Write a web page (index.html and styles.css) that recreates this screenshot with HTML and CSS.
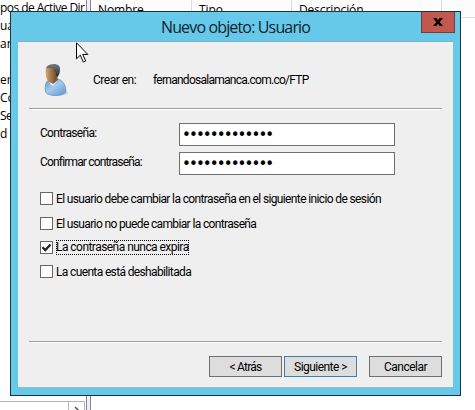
FILE: index.html
```html
<!DOCTYPE html>
<html lang="es">
<head>
<meta charset="utf-8">
<title>Nuevo objeto: Usuario</title>
<link rel="stylesheet" href="styles.css">
</head>
<body>
<div class="desktop">
  <aside class="tree">
    <ul class="tree-list">
      <li class="t-root">pos de Active Dir</li><li>ua</li><li>an</li><li></li><li>ers</li><li>Co</li><li class="t-s">Sec</li><li>d S</li>
    </ul>
    <div class="hscroll"><span class="hscroll-btn"><svg width="8" height="10" viewBox="0 0 8 10"><path d="M2 1l4 4-4 4" fill="none" stroke="#555" stroke-width="1.5"/></svg></span></div>
  </aside>
  <div class="splitter"></div>
  <main class="list">
    <div class="list-head"><span class="c1">Nombre</span><span class="c2">Tipo</span><span class="c3">Descripción</span><span class="c4"></span></div>
  </main>
</div>

<section class="dialog">
  <header class="titlebar">
    <h1><span class="fit title-text">Nuevo objeto: Usuario</span></h1>
    <button class="close" aria-label="Cerrar"><svg width="10" height="8" viewBox="0 0 10 8"><path d="M0 0h3.300L5 2.300 6.700 0H10L6.600 4 10 8H6.700L5 5.700 3.300 8H0l3.400-4z"/></svg></button>
  </header>
  <div class="body">
    <div class="who">
      <svg class="avatar" width="26" height="34" viewBox="0 0 26 34">
        <defs>
          <linearGradient id="coat" x1="0" y1="0" x2="1" y2="1"><stop offset="0" stop-color="#5f97c9"/><stop offset=".45" stop-color="#a5cbed"/><stop offset="1" stop-color="#5a94cc"/></linearGradient>
          <linearGradient id="skin" x1="0" y1="0" x2="1" y2="0"><stop offset="0" stop-color="#d3aa7b"/><stop offset=".4" stop-color="#a6794d"/><stop offset="1" stop-color="#5d3b20"/></linearGradient>
          <linearGradient id="hair" x1="0" y1="0" x2="0" y2="1"><stop offset="0" stop-color="#777b7c"/><stop offset="1" stop-color="#2b2b2b"/></linearGradient>
        </defs>
        <ellipse cx="14" cy="30" rx="11" ry="2.5" fill="#c9cacb"/>
        <path d="M2.500 29c-1-5 0-10 3-12l9-1c5 1 8 5 8.500 12-2 6-17 6-20.500 1z" fill="url(#coat)" stroke="#5788b4" stroke-width=".6"/>
        <path d="M5 17l3 5 2 1 5-6-1-1z" fill="#d9e8f5"/>
        <path d="M6 14l8-1 1 4-5 4-4-4z" fill="#865a34"/>
        <path d="M3 5c2-3 10-2 12 1 1 4-1 10-4 13-2 1-5 1-6-1-2-3-3-9-2-13z" fill="url(#skin)"/>
        <path d="M3 4.500C5 1.500 8 1 11 1c4 0 6.500 2 6 6 0 3-1 5-2.500 7L13 12V9l-2-1V5.500c-3 0-5-1-8-1z" fill="url(#hair)"/>
      </svg>
      <span class="who-label"><span class="fit">Crear en:</span></span>
      <span class="fit path">fernandosalamanca.com.co/FTP</span>
    </div>
    <hr>
    <div class="fields">
      <label class="field"><span class="field-label"><span class="fit l1">Contraseña:</span></span><span class="input">•••••••••••••</span></label>
      <label class="field"><span class="field-label"><span class="fit l2">Confirmar contraseña:</span></span><span class="input">•••••••••••••</span></label>
    </div>
    <div class="options">
      <label class="option"><i class="box"></i><span class="fit k1">El usuario debe cambiar la contraseña en el siguiente inicio de sesión</span></label>
      <label class="option"><i class="box"></i><span class="fit k2">El usuario no puede cambiar la contraseña</span></label>
      <label class="option"><i class="box"><svg width="11" height="11" viewBox="0 0 11 11"><path d="M1.500 5.200L4.300 8 9.500 2.500" fill="none" stroke="#222" stroke-width="2.300"/></svg></i><span class="fit k3 focus">La contraseña nunca expira</span></label>
      <label class="option"><i class="box"></i><span class="fit k4">La cuenta está deshabilitada</span></label>
    </div>
    <hr>
    <footer class="actions">
      <button class="btn back">&lt; Atrás</button>
      <button class="btn primary">Siguiente &gt;</button>
      <button class="btn cancel">Cancelar</button>
    </footer>
  </div>
</section>
<svg class="cursor" width="14" height="22" viewBox="0 0 14 22"><path d="M.5.8v16l3.800-3.600 3 6.800 2.400-1-3-6.600h5.100z" fill="#fff" stroke="#000"/></svg>
</body>
</html>
```
FILE: styles.css
```css
* { box-sizing: border-box; }
body { margin: 0; width: 475px; height: 410px; overflow: hidden; position: relative; background: #fff; color: #000; font: 12px/16px "Open Sans", "Noto Sans", sans-serif; }
.desktop { display: flex; height: 410px; }
.tree { width: 86px; display: flex; flex-direction: column; justify-content: space-between; }
.tree-list { list-style: none; margin: -1px 0 0; padding: 0; line-height: 18px; white-space: nowrap; }
.tree-list li { height: 18px; }
.tree-list .t-root { letter-spacing: -.55px; }
.t-s { letter-spacing: -.6px; }
.hscroll { height: 9px; width: 85px; border: 1px solid #b4b4b4; border-width: 1px 1px 0 0; display: flex; justify-content: flex-end; }
.hscroll-btn { width: 16px; border-left: 1px solid #b4b4b4; padding: 4px 0 0 4px; overflow: hidden; line-height: 0; }
.splitter { width: 5px; border: 1px solid #85858f; background: #f0f0f0; border-width: 0 1px; }
.list { flex: 1; }
.list-head { height: 18px; border-bottom: 1px solid #dcdcdc; background: #fcfcfc; display: flex; line-height: 19px; letter-spacing: -.1px; }
.list-head span { border-right: 1px solid #dcdcdc; padding-left: 7px; height: 17px; }
.c1 { width: 101px; }
.c2 { width: 100px; }
.c3 { width: 150px; }
.list-head .c4 { border: 0; }

.dialog { position: absolute; left: 10px; top: 11px; width: 451px; height: 385px; border: 1px solid #20333d; background: #66c9e9; padding: 0 7px 7px; display: flex; flex-direction: column; font-family: Roboto, sans-serif; }
.titlebar { height: 29px; flex: none; display: flex; justify-content: center; position: relative; }
.titlebar h1 { margin: 0; font: 400 16px/30px "Open Sans", sans-serif; color: #10242c; }
.close { position: absolute; right: -2px; top: 0; width: 34px; height: 21px; padding: 0 0 1px; border: 1px solid #763b39; border-top: 0; background: #c1594f; display: flex; align-items: center; justify-content: center; }
.body { flex: 1; background: #efefef; border-top: 1px solid #7fb2c5; border-bottom: 1px solid #9dbac6; padding: 0 11px; }
.fit { white-space: nowrap; letter-spacing: -.5px; }
.fit.title-text { letter-spacing: -.85px; }
.fit.path { letter-spacing: -.73px; }
.fit.l1 { letter-spacing: -.7px; }
.fit.l2 { letter-spacing: -.83px; }
.fit.k1 { letter-spacing: -.63px; }
.fit.k2 { letter-spacing: -.64px; }
.fit.k3 { letter-spacing: -.54px; }
.fit.k4 { letter-spacing: -.64px; }
.who { height: 66px; display: flex; align-items: center; padding: 10px 0 0 12px; }
.avatar { margin: 0 24px 0 2px; }
.who-label { width: 60px; }
hr { margin: 0; width: 413px; height: 2px; border: 0; border-top: 1px solid #a0a0a0; background: #fff; }
.fields { padding: 13px 0 0 11px; display: flex; flex-direction: column; gap: 6px; }
.field { display: flex; height: 23px; }
.field-label { width: 139px; line-height: 21px; }
.input { width: 216px; border: 1px solid #707070; background: #fff; padding-left: 2px; font: 15px/22px "DejaVu Sans", sans-serif; letter-spacing: -1.9px; white-space: nowrap; }
.options { padding: 16px 0 0 11px; display: grid; grid-template-rows: 25px 24px 24px 24px; height: 166px; align-content: start; }
.option { display: flex; height: 15px; align-items: center; gap: 3px; }
.box { width: 13px; height: 13px; border: 1px solid #666; background: #fff; flex: none; line-height: 0; }
.focus { outline: 1px dotted #000; outline-offset: -1px; height: 15px; line-height: 14px; }
.actions { display: flex; padding: 13px 0 0 180px; }
.btn { width: 73px; height: 21px; margin-right: 2px; padding: 0; border: 1px solid #707070; background: #ddd; color: #000; font: 12px/18px Roboto, sans-serif; letter-spacing: -.55px; }
.back { letter-spacing: -.75px; }
.primary { border-color: #3c7fb1; margin-right: 12px; }
.cancel { margin-right: 0; letter-spacing: -.5px; }
.cursor { position: absolute; left: 76px; top: 42px; }
```
